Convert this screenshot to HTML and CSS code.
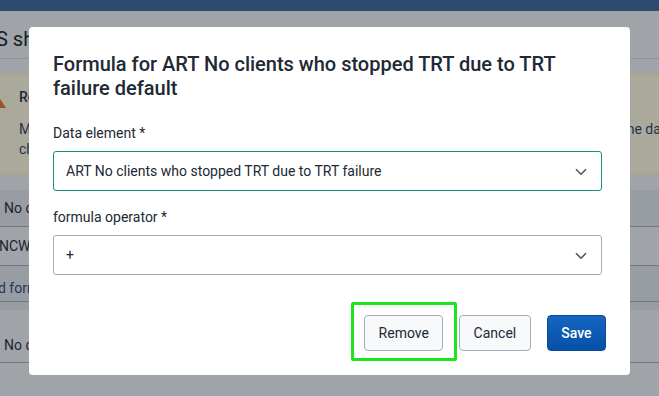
FILE: index.html
```html
<!DOCTYPE html>
<html lang="en">
<head>
<meta charset="utf-8">
<title>Formula editor</title>
<link rel="stylesheet" href="styles.css">
</head>
<body>
<div class="page">
  <div class="topbar"></div>
  <div class="page-head"><span class="page-title">S show formulas for data elements</span></div>
  <div class="warning">
    <svg class="warn-icon" width="18" height="14" viewBox="0 0 18 14"><path d="M9 0 L18 14 L0 14 Z" fill="#9e5420"/></svg>
    <div class="warn-body">
      <div class="warn-title">Review formulas</div>
      <div class="warn-line"><span>Make sure every formula uses the</span><span class="warn-tail">ne data</span></div>
      <div class="warn-line">check the result</div>
    </div>
  </div>
  <div class="rows">
    <div class="row row-dark"><span class="cell cell-indent">No clients</span></div>
    <div class="row row-light"><span class="cell">NCWS</span></div>
    <div class="row row-dark row-tall"><span class="cell cell-link">d formula</span></div>
    <div class="row row-light row-last"><span class="cell cell-indent">No clients</span></div>
  </div>
</div>

<div class="backdrop">
  <div class="modal">
    <h1 class="modal-title">Formula for ART No clients who stopped TRT due to TRT failure default</h1>
    <div class="field">
      <label class="field-label">Data element *</label>
      <div class="select select-valid">
        <span class="select-value">ART No clients who stopped TRT due to TRT failure</span>
        <svg class="chevron" width="12" height="8" viewBox="0 0 12 8"><path d="M1 1.2 L6 6.2 L11 1.2" fill="none" stroke="#4a5768" stroke-width="1.6"/></svg>
      </div>
    </div>
    <div class="field field-second">
      <label class="field-label">formula operator *</label>
      <div class="select">
        <span class="select-value">+</span>
        <svg class="chevron" width="12" height="8" viewBox="0 0 12 8"><path d="M1 1.2 L6 6.2 L11 1.2" fill="none" stroke="#4a5768" stroke-width="1.6"/></svg>
      </div>
    </div>
    <div class="actions">
      <div class="highlight-wrap">
        <button class="btn">Remove</button>
        <span class="highlight"></span>
      </div>
      <button class="btn">Cancel</button>
      <button class="btn btn-primary">Save</button>
    </div>
  </div>
</div>
</body>
</html>
```

FILE: styles.css
```css
html, body {
  margin: 0;
  padding: 0;
}
body {
  width: 659px;
  height: 396px;
  overflow: hidden;
  background: #a0a4a8;
  font-family: Roboto, "Noto Sans", sans-serif;
  position: relative;
}

/* background page (already dimmed by the modal layer) */
.page {
  width: 659px;
  height: 396px;
  overflow: hidden;
}
.topbar {
  height: 11px;
  background: #2b4c6d;
}
.page-head {
  height: 48px;
  border-bottom: 1px solid #8e949b;
  display: flex;
  align-items: flex-end;
  padding-bottom: 7px;
  box-sizing: border-box;
}
.page-title {
  font-size: 20px;
  line-height: 24px;
  color: #171d25;
  text-indent: -4px;
  white-space: nowrap;
}
.warning {
  margin-top: 16px;
  height: 98px;
  box-sizing: border-box;
  background: #aba99b;
  border-top: 1px solid #b7a760;
  border-bottom: 1px solid #b7a760;
  display: flex;
  gap: 13px;
  padding-top: 13px;
}
.warn-icon {
  margin-left: -12px;
  margin-top: 5px;
  flex: none;
}
.warn-body {
  flex: 1;
  min-width: 0;
}
.warn-title {
  font-size: 14px;
  line-height: 16px;
  font-weight: 500;
  color: #1a2a40;
  white-space: nowrap;
}
.warn-line {
  font-size: 14px;
  line-height: 20px;
  color: #1f334d;
  display: flex;
  white-space: nowrap;
}
.warn-title + .warn-line {
  margin-top: 14px;
}
.warn-tail {
  margin-left: auto;
  margin-right: -14px;
}
.rows {
  margin-top: 17px;
}
.row {
  display: flex;
  align-items: center;
  border-bottom: 1px solid #6f7782;
  box-sizing: border-box;
  white-space: nowrap;
}
.row-dark {
  background: #989ca3;
  height: 37px;
}
.row-light {
  background: #a0a4a8;
  height: 39px;
}
.row-tall {
  height: 44px;
  align-items: flex-start;
  padding-top: 12px;
  border-bottom: none;
  box-shadow: inset 0 -8px 0 #989ca3, inset 0 -9px 0 #6f7782;
}
.row-last {
  height: 53px;
  align-items: flex-end;
  padding-bottom: 7px;
}
.cell {
  font-size: 14px;
  line-height: 20px;
  color: #1b2431;
  margin-left: -1px;
}
.cell-indent {
  margin-left: 4px;
}
.cell-link {
  color: #24375a;
  margin-left: -2px;
}

/* modal layer */
.backdrop {
  position: absolute;
  inset: 0;
  display: flex;
  justify-content: center;
  align-items: flex-start;
  padding-top: 27px;
  box-sizing: border-box;
}
.modal {
  width: 601px;
  background: #ffffff;
  border-radius: 4px;
  padding: 25px 24px 24px;
  box-sizing: border-box;
  position: relative;
}
.modal-title {
  margin: 0;
  font-size: 20px;
  line-height: 24px;
  font-weight: 500;
  color: #212934;
}
.field {
  margin-top: 24px;
}
.field-second {
  margin-top: 17px;
}
.field-label {
  display: block;
  font-size: 14px;
  line-height: 18px;
  color: #212934;
  margin-bottom: 9px;
}
.select {
  width: calc(100% - 4px);
  height: 40px;
  box-sizing: border-box;
  border: 1px solid #a0adba;
  border-radius: 3px;
  display: flex;
  align-items: center;
  padding: 0 14px 0 12px;
  background: #ffffff;
}
.select-valid {
  border-color: #1d8d7f;
}
.select-value {
  flex: 1;
  font-size: 14px;
  line-height: 18px;
  color: #212934;
}
.chevron {
  flex: none;
  margin-top: 2px;
}
.actions {
  margin-top: 40px;
  display: flex;
  justify-content: flex-end;
  gap: 16px;
}
.btn {
  height: 36px;
  box-sizing: border-box;
  border: 1px solid #a0adba;
  border-radius: 4px;
  background: #f8f9fa;
  color: #212934;
  font-family: Roboto, "Noto Sans", sans-serif;
  font-size: 14px;
  padding: 0 13.5px;
  margin: 0;
}
.btn-primary {
  background: linear-gradient(180deg, #1565c0 0%, #0650a7 100%);
  border-color: #0b4a9a;
  color: #ffffff;
  font-weight: 500;
}
.highlight-wrap {
  position: relative;
  display: flex;
}
.highlight-wrap .btn {
  width: 79px;
}
.highlight {
  position: absolute;
  left: -13px;
  top: -13px;
  width: 106px;
  height: 59px;
  box-sizing: border-box;
  border: 3px solid #1be51b;
  border-radius: 2px;
  pointer-events: none;
}
```
